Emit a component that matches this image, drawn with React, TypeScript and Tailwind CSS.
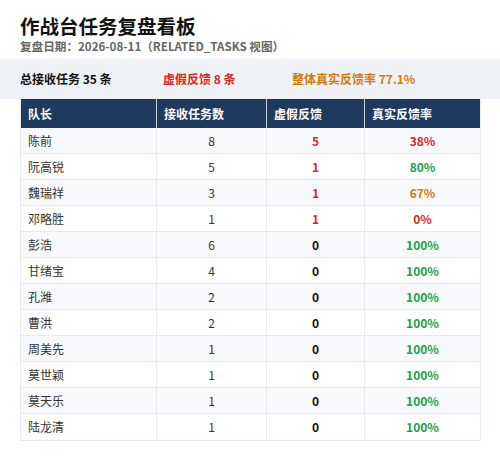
import React from "react";

type Row = { name: string; recv: number; fake: number; rate: string; rc: string };

const RED = "text-[#dc2626]";
const GREEN = "text-[#16a34a]";
const ORANGE = "text-[#d97706]";

const rows: Row[] = [
  { name: "陈前", recv: 8, fake: 5, rate: "38%", rc: RED },
  { name: "阮高锐", recv: 5, fake: 1, rate: "80%", rc: GREEN },
  { name: "魏瑞祥", recv: 3, fake: 1, rate: "67%", rc: ORANGE },
  { name: "邓略胜", recv: 1, fake: 1, rate: "0%", rc: RED },
  { name: "彭浩", recv: 6, fake: 0, rate: "100%", rc: GREEN },
  { name: "甘绪宝", recv: 4, fake: 0, rate: "100%", rc: GREEN },
  { name: "孔潍", recv: 2, fake: 0, rate: "100%", rc: GREEN },
  { name: "曹洪", recv: 2, fake: 0, rate: "100%", rc: GREEN },
  { name: "周美先", recv: 1, fake: 0, rate: "100%", rc: GREEN },
  { name: "莫世颖", recv: 1, fake: 0, rate: "100%", rc: GREEN },
  { name: "莫天乐", recv: 1, fake: 0, rate: "100%", rc: GREEN },
  { name: "陆龙清", recv: 1, fake: 0, rate: "100%", rc: GREEN },
];

export default function App() {
  return (
    <div
      className="w-[500px] h-[458px] bg-white overflow-hidden"
      style={{ fontFamily: '"Noto Sans CJK SC", "Noto Sans", sans-serif' }}
    >
      <div className="px-5 pt-[14px]">
        <div className="text-[19.5px] leading-[24px] font-bold text-[#111]">作战台任务复盘看板</div>
        <div className="text-[11.6px] leading-[16px] font-semibold text-[#666]">
          复盘日期：2026-08-11（RELATED_TASKS 视图）
        </div>
      </div>
      <div className="mt-[5px] h-[40px] bg-[#eef2f7] flex items-center px-5 text-[12px] font-semibold">
        <div className="w-[143px] text-[#111]">总接收任务 35 条</div>
        <div className={`w-[129px] ${RED}`}>虚假反馈 8 条</div>
        <div className={ORANGE}>整体真实反馈率 77.1%</div>
      </div>
      <div className="mx-5 w-[461px] border-x border-b border-[#e6ebf2]">
        <div className="flex h-[29px] bg-[#1f3a5f] text-white text-[12px] font-semibold">
          <div className="w-[136px] pl-[7px] flex items-center border-r border-[#c5d0de]">队长</div>
          <div className="w-[110px] pl-[7px] flex items-center border-r border-[#c5d0de]">接收任务数</div>
          <div className="w-[98px] pl-[7px] flex items-center border-r border-[#c5d0de]">虚假反馈</div>
          <div className="flex-1 pl-[7px] flex items-center">真实反馈率</div>
        </div>
        {rows.map((r, i) => (
          <div
            key={r.name}
            className={`flex h-[26px] text-[12px] text-[#333] ${
              i < rows.length - 1 ? "border-b border-[#e6ebf2]" : ""
            } ${i % 2 === 0 ? "bg-[#f7f9fc]" : "bg-white"}`}
          >
            <div className="w-[136px] pl-[7px] flex items-center border-r border-[#e6ebf2]">{r.name}</div>
            <div className="w-[110px] flex items-center justify-center border-r border-[#e6ebf2]">{r.recv}</div>
            <div
              className={`w-[98px] flex items-center justify-center font-bold border-r border-[#e6ebf2] ${
                r.fake > 0 ? RED : "text-[#111]"
              }`}
            >
              {r.fake}
            </div>
            <div className={`flex-1 flex items-center justify-center font-semibold ${r.rc}`}>{r.rate}</div>
          </div>
        ))}
      </div>
    </div>
  );
}
